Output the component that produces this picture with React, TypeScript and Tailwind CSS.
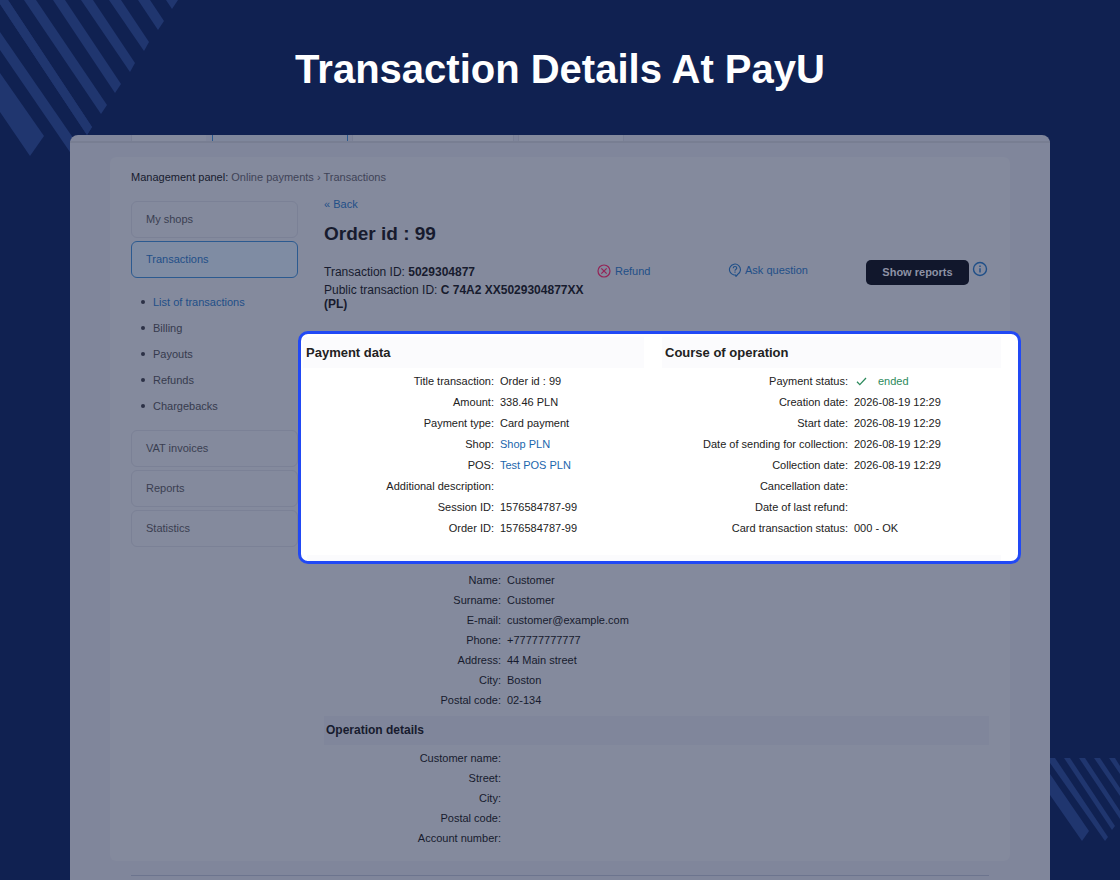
import { type ReactNode } from 'react';

type Row = {
  label: string;
  value?: string;
  kind?: 'link' | 'status';
};

const paymentRows: Row[] = [
  { label: 'Title transaction', value: 'Order id : 99' },
  { label: 'Amount', value: '338.46 PLN' },
  { label: 'Payment type', value: 'Card payment' },
  { label: 'Shop', value: 'Shop PLN', kind: 'link' },
  { label: 'POS', value: 'Test POS PLN', kind: 'link' },
  { label: 'Additional description' },
  { label: 'Session ID', value: '1576584787-99' },
  { label: 'Order ID', value: '1576584787-99' },
];

const operationRows: Row[] = [
  { label: 'Payment status', value: 'ended', kind: 'status' },
  { label: 'Creation date', value: '2026-08-19 12:29' },
  { label: 'Start date', value: '2026-08-19 12:29' },
  { label: 'Date of sending for collection', value: '2026-08-19 12:29' },
  { label: 'Collection date', value: '2026-08-19 12:29' },
  { label: 'Cancellation date' },
  { label: 'Date of last refund' },
  { label: 'Card transaction status', value: '000 - OK' },
];

const customerRows: Row[] = [
  { label: 'Name', value: 'Customer' },
  { label: 'Surname', value: 'Customer' },
  { label: 'E-mail', value: 'customer@example.com' },
  { label: 'Phone', value: '+77777777777' },
  { label: 'Address', value: '44 Main street' },
  { label: 'City', value: 'Boston' },
  { label: 'Postal code', value: '02-134' },
];

const detailRows: Row[] = [
  { label: 'Customer name' },
  { label: 'Street' },
  { label: 'City' },
  { label: 'Postal code' },
  { label: 'Account number' },
];

const subLinks = ['List of transactions', 'Billing', 'Payouts', 'Refunds', 'Chargebacks'];

function Value({ row }: { row: Row }) {
  if (row.kind === 'link') {
    return (
      <a href="#" className="text-[#1a66ad]">
        {row.value}
      </a>
    );
  }
  if (row.kind === 'status') {
    return (
      <span className="flex items-center gap-2.5 text-[#2c8a5c]">
        <svg viewBox="0 0 14 12" className="h-3 w-3.5" fill="none" stroke="currentColor" strokeWidth="1.3">
          <path d="M3 6.8 5.8 9.6 12 3" />
        </svg>
        {row.value}
      </span>
    );
  }
  return <>{row.value}</>;
}

function DataTable({ rows, labelWidth, rowHeight }: { rows: Row[]; labelWidth: string; rowHeight: string }) {
  return (
    <table className="w-full table-fixed border-collapse text-[11px] leading-4">
      <tbody>
        {rows.map((row) => (
          <tr key={row.label} className={rowHeight}>
            <th scope="row" className={`${labelWidth} p-0 text-right font-normal`}>
              {row.label}:
            </th>
            <td className="p-0 pl-1.5">
              <Value row={row} />
            </td>
          </tr>
        ))}
      </tbody>
    </table>
  );
}

function NavButton({ active, children }: { active?: boolean; children: ReactNode }) {
  return (
    <button
      type="button"
      className={`block h-[37px] w-full rounded-md border pl-3.5 text-left text-[11px] ${
        active ? 'border-[#2b5a90] bg-[#7f8ca3] text-[#1f4f88]' : 'border-[#7b8196] text-[#3a3e51]'
      }`}
    >
      {children}
    </button>
  );
}

function Sidebar() {
  return (
    <nav className="mt-4 w-[167px] shrink-0">
      <div className="space-y-[3px]">
        <NavButton>My shops</NavButton>
        <NavButton active>Transactions</NavButton>
      </div>
      <ul className="mt-[11px] mb-[11px] text-[11px] leading-[26px] text-[#363a4d]">
        {subLinks.map((name, i) => (
          <li key={name} className="flex items-center pl-2.5">
            <span className="mr-2 size-1 rounded-full bg-[#2c3146]" />
            <a href="#" className={i === 0 ? 'text-[#1f4f88]' : ''}>
              {name}
            </a>
          </li>
        ))}
      </ul>
      <div className="space-y-[3px]">
        <NavButton>VAT invoices</NavButton>
        <NavButton>Reports</NavButton>
        <NavButton>Statistics</NavButton>
      </div>
    </nav>
  );
}

function Actions() {
  return (
    <div className="mt-3 flex items-start text-[11px] text-[#1f4f88]">
      <div className="w-[273px] text-xs leading-[14px] text-[#171b2e]">
        <p className="mt-[5px]">
          Transaction ID: <b>5029304877</b>
        </p>
        <p className="mt-1">
          Public transaction ID: <b>C 74A2 XX5029304877XX (PL)</b>
        </p>
      </div>
      <a href="#" className="mt-[3px] flex w-[131px] items-center gap-1 leading-4">
        <svg viewBox="0 0 14 14" className="size-3.5" fill="none" stroke="#952356" strokeWidth="1.2">
          <circle cx="7" cy="7" r="6" />
          <path d="m4.3 4.3 5.4 5.4M9.7 4.3 4.3 9.7" />
        </svg>
        Refund
      </a>
      <a href="#" className="mt-0.5 flex flex-1 items-center gap-[3px] leading-4">
        <svg viewBox="0 0 14 14" className="size-3.5" fill="none" stroke="currentColor" strokeWidth="1.1">
          <path d="M6 12A5.5 5.5 0 1 1 9.8 11.3L8 13.4 7.6 12Z" />
          <path d="M5.2 5.3C5.2 4 6 3.5 7 3.5s1.8.6 1.8 1.600C8.8 6.4 7 6.3 7 7.7M7 8.6v1.100" />
        </svg>
        Ask question
      </a>
      <button
        type="button"
        className="h-[25px] w-[103px] rounded-[5px] bg-[#11172c] text-[11px] font-bold text-[#8d92a5]"
      >
        Show reports
      </button>
      <button type="button" aria-label="About reports" className="mt-px mr-px ml-[3px]">
        <svg viewBox="0 0 16 16" className="size-4" fill="none" stroke="currentColor" strokeWidth="1.4">
          <circle cx="8" cy="8" r="6.5" />
          <path d="M8 7.2v4.3M8 4.5v1.4" />
        </svg>
      </button>
    </div>
  );
}

function Spotlight() {
  return (
    <section className="relative z-10 mt-5 -mr-8 -ml-[26px] grid grid-cols-[341px_1fr] gap-x-[18px] rounded-[10px] border-3 border-[#2149f5] bg-white pt-[3px] pr-[17px] pl-0.5 text-[#222222]">
      <div>
        <h3 className="mb-0.5 bg-[#fbfbfd] pl-[3px] text-[13px] leading-[31px] font-bold">Payment data</h3>
        <DataTable rows={paymentRows} labelWidth="w-[191px]" rowHeight="h-[21px]" />
      </div>
      <div>
        <h3 className="mb-0.5 bg-[#fbfbfd] pl-[3px] text-[13px] leading-[31px] font-bold">Course of operation</h3>
        <DataTable rows={operationRows} labelWidth="w-[186px]" rowHeight="h-[21px]" />
      </div>
      <div className="col-span-2 mt-[17px] ml-1 h-1.5 bg-[#fbfbfd]" />
    </section>
  );
}

function TopTabs() {
  return (
    <div className="flex h-2 border-b-2 border-[#787e92] pl-[61px]">
      <div className="mr-1.5 w-[75px] border-l border-[#7a8095] bg-[#848a9d]" />
      <div className="mr-1 w-[136px] border-x border-[#2b5a90] bg-[#7f879c]" />
      <div className="mr-1 w-[162px] border-x border-[#7a8095] bg-[#848a9d]" />
      <div className="w-[106px] border-x border-[#7a8095] bg-[#848a9d]" />
    </div>
  );
}

function TopStripes() {
  return (
    <svg viewBox="0 0 180 160" className="absolute top-0 left-0 w-[180px]" fill="#20366f">
      <path d="M0 73 44 136 30 156 0 112Z" />
      <path d="M0 32 78 145 72 155 0 50Z" />
      <path d="M-4 -6H4L92 127 87 135 -4 -2Z" />
      <path d="M0 0H8L92 127 87 135 0 4Z" />
      <path d="M24 0H36L107 105 101 114Z" />
      <path d="M53 0H65L121 84 115 93Z" />
      <path d="M81 0H93L135 63 130 72Z" />
      <path d="M109 0H121L149 42 144 51Z" />
      <path d="M138 0H150L164 21 158 30Z" />
      <path d="M166 0H178L172 9Z" />
    </svg>
  );
}

function SideStripes() {
  return (
    <svg viewBox="0 0 70 84" className="absolute right-0 bottom-[38px] w-[70px]" fill="#20366f">
      <path d="M0 16 39 73 32 83 0 37Z" />
      <path d="M0 0H5L58 79 55 83 0 5Z" />
      <path d="M14 0H20L65 68 62 72Z" />
      <path d="M29 0H35L70 53V61Z" />
      <path d="M44 0H50L70 30V38Z" />
      <path d="M59 0H65L70 8V16Z" />
    </svg>
  );
}

export default function App() {
  return (
    <div className="relative min-h-screen overflow-hidden bg-[#102151] font-['Liberation_Sans',Arial,sans-serif]">
      <TopStripes />
      <SideStripes />
      <h1 className="relative pt-[41px] pb-[37px] text-center text-[40px] leading-[57px] font-bold text-white">
        Transaction Details At PayU
      </h1>
      <main className="relative mx-[70px] overflow-hidden rounded-t-lg bg-[#80869b] text-[#171b2e]">
        <TopTabs />
        <div className="mx-10 mt-3.5 rounded-md bg-[#848a9d] px-[21px] pt-3 pb-[13px]">
          <p className="text-[11px] leading-4">
            Management panel: <span className="text-[#3f4357]">Online payments › Transactions</span>
          </p>
          <div className="flex gap-[26px]">
            <Sidebar />
            <div className="min-w-0 flex-1 pt-[11px]">
              <a href="#" className="block text-[11px] leading-4 text-[#1f4f88]">
                « Back
              </a>
              <h2 className="mt-2 text-[19px] leading-7 font-bold">Order id : 99</h2>
              <Actions />
              <Spotlight />
              <div className="mt-1.5">
                <DataTable rows={customerRows} labelWidth="w-[177px]" rowHeight="h-5" />
              </div>
              <h3 className="mt-1.5 mb-[3px] bg-[#80869b] pl-0.5 text-xs leading-[29px] font-bold">
                Operation details
              </h3>
              <DataTable rows={detailRows} labelWidth="w-[177px]" rowHeight="h-5" />
            </div>
          </div>
        </div>
        <div className="mx-[61px] mt-3.5 h-[5px] border-t border-[#6c748e]" />
      </main>
    </div>
  );
}
